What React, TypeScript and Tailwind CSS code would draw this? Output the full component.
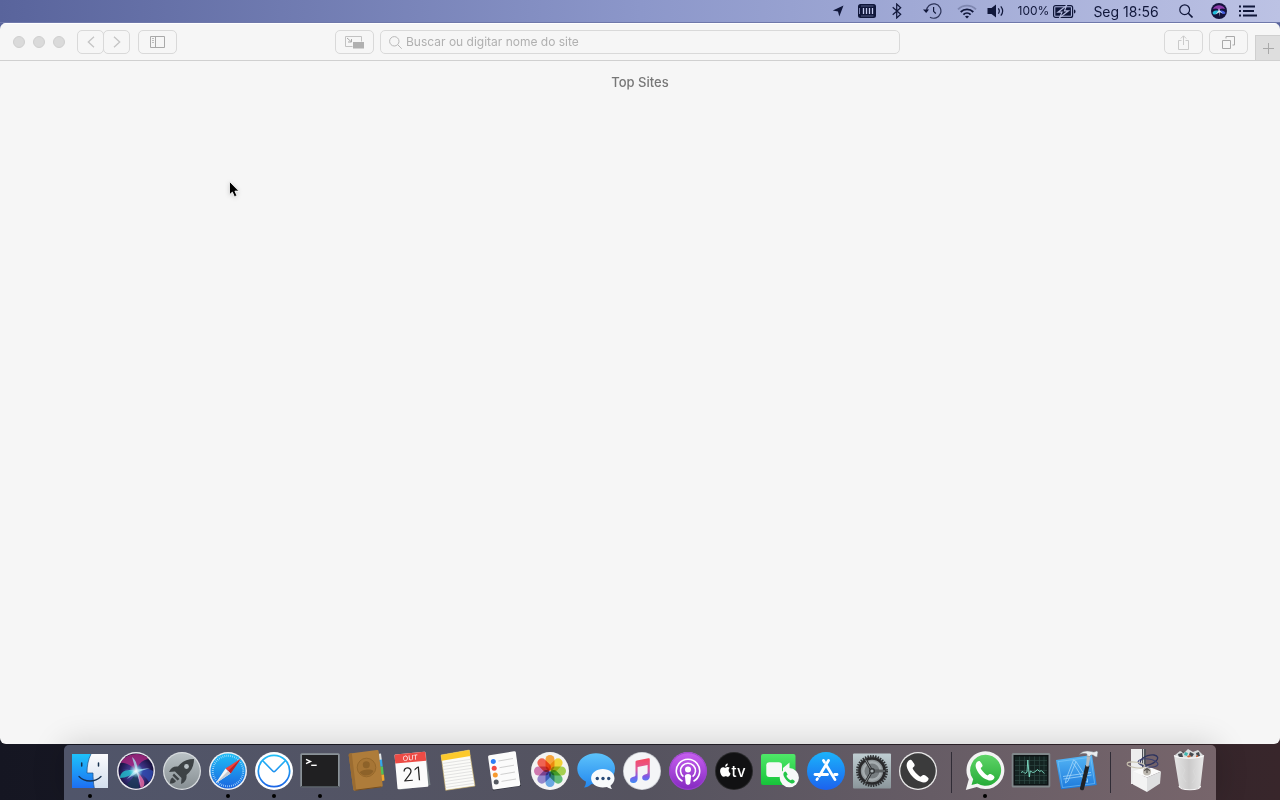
import React from 'react';

interface IconProps {
  children: React.ReactNode;
}

interface DockItem {
  label: string;
  icon: React.ReactNode;
  running?: boolean;
}

// Every dock icon is drawn on a 40x40 grid
const DockIcon: React.FC<IconProps> = ({ children }) => (
  <svg viewBox="0 0 40 40" className="w-10 h-10 overflow-visible" aria-hidden="true">
    {children}
  </svg>
);

const handsetPath =
  'M10.500 9.800c1-.9 2-1.200 2.700-.9 1 .5 3 3.500 3.400 4.900.2 1-.2 1.700-2 3.100-.3 1.500 5.500 8 8 8.800 1.800-1.600 2.500-2 3.500-1.700 1.500.5 4 2.300 4.400 3.300.3.900-.2 2-1.300 3-1.700 1.500-4 1.800-7 .3C16 28.500 11.500 23 9.300 17.500c-1.200-3-.8-5.800 1.200-7.700z';

const FinderIcon = () => (
  <DockIcon>
    <defs>
      <linearGradient id="finderBlue" x1="0" y1="0" x2="0" y2="1">
        <stop offset="0" stopColor="#1ec3fb" />
        <stop offset="1" stopColor="#1d6ff2" />
      </linearGradient>
      <linearGradient id="finderWhite" x1="0" y1="0" x2="0" y2="1">
        <stop offset="0" stopColor="#fbfbfd" />
        <stop offset="1" stopColor="#d3dfee" />
      </linearGradient>
    </defs>
    <rect x="2" y="3" width="36" height="34" fill="url(#finderBlue)" />
    <path d="M21 3C18 9 17 15 17 22h6c0 5 .3 10 1.300 15H38V3z" fill="url(#finderWhite)" />
    <path d="M21 3C18 9 17 15 17 22h6c0 5 .3 10 1.300 15" fill="none" stroke="#1c4f86" strokeWidth=".7" />
    <path d="M11.700 12v3M28.500 12v3" stroke="#16304e" strokeWidth="1.5" strokeLinecap="round" />
    <path d="M9 25.500c6 6 16 6 22 0" fill="none" stroke="#16304e" strokeWidth="1.3" strokeLinecap="round" />
  </DockIcon>
);

const SiriIcon = () => (
  <DockIcon>
    <defs>
      <radialGradient id="siriBase" cx=".5" cy=".55" r=".55">
        <stop offset="0" stopColor="#4c6fb8" />
        <stop offset=".5" stopColor="#3a3080" />
        <stop offset="1" stopColor="#130d34" />
      </radialGradient>
      <radialGradient id="siriGlow">
        <stop offset="0" stopColor="#fff" />
        <stop offset=".35" stopColor="#d6f6ff" stopOpacity=".7" />
        <stop offset="1" stopColor="#7ff" stopOpacity="0" />
      </radialGradient>
      <clipPath id="siriClip">
        <circle cx="20" cy="20" r="17.500" />
      </clipPath>
    </defs>
    <circle cx="20" cy="20" r="19" fill="#e9e8ee" />
    <circle cx="20" cy="20" r="17.5" fill="url(#siriBase)" />
    <g clipPath="url(#siriClip)">
      <path d="M4 12C10 2 25 0 34 8c-6 0-12 4-14 12C16 15 10 11 4 12z" fill="#b52a86" opacity=".75" />
      <path d="M20 20C10 17 4 21 4 27c6 0 12-3 16-7z" fill="#22cfd6" opacity=".75" />
      <path d="M20 20c3 6 3 12 5 18 3-2 4-5 3-8-2-4-4-7-8-10z" fill="#ef6ca4" opacity=".8" />
      <path d="M20 20c-2 6-6 10-9 13 3 4 8 6 12 5 0-6-1-12-3-18z" fill="#1a3a55" opacity=".8" />
      <path d="M20 20c6-3 12-3 17 0 0 5-2 9-4 11-3-5-7-8-13-11z" fill="#2f4bb0" opacity=".8" />
      <path d="M20 20L16 6c4 3 5 7 5.500 12.500L34 17l-12 4 3 14-4-13-10 6 7-8L6 18z" fill="#a9e8f4" opacity=".75" />
    </g>
    <circle cx="20" cy="20" r="7" fill="url(#siriGlow)" />
  </DockIcon>
);

const LaunchpadIcon = () => (
  <DockIcon>
    <defs>
      <linearGradient id="launchpadBg" x1="0" y1="0" x2="0" y2="1">
        <stop offset="0" stopColor="#b9c1c5" />
        <stop offset="1" stopColor="#878f93" />
      </linearGradient>
    </defs>
    <circle cx="20" cy="20" r="19" fill="#d9dde0" />
    <circle cx="20" cy="20" r="17.8" fill="url(#launchpadBg)" />
    <path
      d="M32 8c-7 0-12 2.500-16 7.500-4-.5-7 1-9 5.500l6-.5 6.500 6.500-.5 6c4.500-2 6-5 5.500-9 5-4 7.500-9 7.500-16z"
      fill="#3d4245"
    />
    <path d="M12 22.500l5.500 5.500-2 1.500-5-5zM10.500 26.500c-2 1-2.500 3-2.500 6 3 0 5-.5 6-2.500z" fill="#3d4245" />
    <circle cx="24.500" cy="15.500" r="2.400" fill="#b7bfc3" />
  </DockIcon>
);

const SafariIcon = () => (
  <DockIcon>
    <defs>
      <linearGradient id="safariBg" x1="0" y1="0" x2="0" y2="1">
        <stop offset="0" stopColor="#1fbdf5" />
        <stop offset="1" stopColor="#1b66e0" />
      </linearGradient>
    </defs>
    <circle cx="20" cy="20" r="19" fill="#eef0f3" />
    <circle cx="20" cy="20" r="17.5" fill="url(#safariBg)" />
    <circle cx="20" cy="20" r="15.2" fill="none" stroke="#c7ebff" strokeWidth="2" strokeDasharray=".6 1.39" />
    <path d="M33 7.500L17.500 17.500l5 5z" fill="#f1413c" />
    <path d="M22.500 22.500L33 7.500 20 20z" fill="#b9242a" />
    <path d="M7.500 32.500l10-15 5 5z" fill="#f7f7f7" />
    <path d="M7.500 32.500L20 20l2.500 2.500z" fill="#c5ccd3" />
  </DockIcon>
);

const MailIcon = () => (
  <DockIcon>
    <defs>
      <linearGradient id="mailRing" x1="0" y1="3" x2="0" y2="37" gradientUnits="userSpaceOnUse">
        <stop offset="0" stopColor="#22c3f8" />
        <stop offset="1" stopColor="#1b62e6" />
      </linearGradient>
    </defs>
    <circle cx="20" cy="20" r="19" fill="#fff" />
    <circle cx="20" cy="20" r="15.7" fill="none" stroke="url(#mailRing)" strokeWidth="1.7" />
    <path d="M8.500 9.500L19 20.200c.6.600 1.400.6 2 0L31.500 9.500" fill="none" stroke="url(#mailRing)" strokeWidth="1.6" />
  </DockIcon>
);

const TerminalIcon = () => (
  <DockIcon>
    <rect x=".3" y="2.3" width="39.4" height="34" rx="1.5" fill="#8a9298" />
    <rect x="1" y="35" width="38" height="1.3" fill="#4e555b" />
    <rect x="2" y="4" width="36" height="31" fill="#202022" />
    <path d="M6 8.300l4.500 2.200L6 12.700" fill="none" stroke="#fff" strokeWidth="1.4" />
    <path d="M11.200 14.300h5.500" stroke="#fff" strokeWidth="1.4" />
  </DockIcon>
);

const ContactsIcon = () => (
  <DockIcon>
    <path d="M31 3l4-.5 1 8-4 1z" fill="#dfe3e6" />
    <path d="M32 9l4-.5.700 7-4 .5z" fill="#37a7ea" />
    <path d="M33 16l4-.5.700 8-4 .5z" fill="#53c355" />
    <path d="M33 24l5-.5.500 6-5 1z" fill="#f3a72d" />
    <path d="M2.700 4.200Q2.600 2.700 4 2.500L31-.9q1.400-.2 1.600 1.200l4.100 34q.2 1.400-1.200 1.600L9 39.600q-1.500.2-1.700-1.300z" fill="#ae7c3a" />
    <path d="M2.700 4.200Q2.600 2.700 4 2.500l1.800-.2 4.500 37.100-1.300.2q-1.500.2-1.700-1.300z" fill="#9b6c31" />
    <path d="M9.500 39.200l26-3.400" stroke="#754e20" strokeWidth="1" />
    <circle cx="20.500" cy="16.500" r="9.3" fill="#a67535" stroke="#8f6328" strokeWidth=".8" />
    <circle cx="20.300" cy="13.700" r="3.500" fill="#8d6229" />
    <path d="M13.700 21.500c2-3 11-4.200 13.800-1.500-2.500 5.300-10.500 6.300-13.800 1.500z" fill="#8d6229" />
  </DockIcon>
);

const CalendarIcon = () => (
  <DockIcon>
    <path d="M5 8L34 3l4.500 31-31 5z" fill="#778084" />
    <g transform="rotate(-5 20 20)">
      <rect x="4" y="2" width="31" height="35" rx="1" fill="#fbfbfb" />
      <path d="M4 11V3a1 1 0 0 1 1-1h29a1 1 0 0 1 1 1v8z" fill="#ec4b45" />
      <text x="19.500" y="9.300" textAnchor="middle" fontSize="7" fill="#fff" fontFamily="Inter, sans-serif">OUT</text>
      <text x="19.500" y="30" textAnchor="middle" fontSize="19" fontWeight="300" fill="#222" fontFamily="Inter, sans-serif">21</text>
    </g>
  </DockIcon>
);

const NotesIcon = () => (
  <DockIcon>
    <path d="M3 4L31.300-1 37 35 7.700 39.300z" fill="#fbfbf8" stroke="#d0b464" strokeWidth=".6" />
    <path d="M3 4L31.300-1l1 6L3.800 9.700z" fill="#fcc92c" />
    <path
      d="M4.200 12.500l28.500-4.200M4.700 15.500l28.500-4.200M5.100 18.500l28.500-4.200M5.500 21.500L34 17.300M6 24.500l28.500-4.200M6.400 27.500l28.600-4.200M6.800 30.500l28.700-4.200M7.200 33.500l28.700-4.200M7.500 36.500l29-4.200"
      stroke="#d2d2d2"
      strokeWidth=".6"
    />
  </DockIcon>
);

const RemindersIcon = () => (
  <DockIcon>
    <path d="M5 6l27-4 5 33-28 4.500z" fill="#2b2e38" />
    <path d="M4.100 6.200q-.2-1.600 1.400-1.900L30 .3q1.600-.3 1.900 1.300l4.400 31.500q.2 1.600-1.400 1.900L10.400 38.500q-1.600.3-1.900-1.300z" fill="#fbfbfb" />
    <circle cx="9.300" cy="10.400" r="2.5" fill="#2b7df5" />
    <circle cx="10.200" cy="17.200" r="2.5" fill="#f04b45" />
    <circle cx="11.300" cy="24" r="2.5" fill="#f79a2e" />
    <circle cx="12.200" cy="31" r="2.5" fill="#555961" />
    <path d="M14.500 10L29 7.500M15.500 16.700L30 14.200M16.500 23.500L31 21M17.500 30.400L32 28" stroke="#bbb" strokeWidth=".7" />
  </DockIcon>
);

const petals = ['#f79b27', '#f2cf22', '#9ccb3e', '#53b66b', '#5b9fe0', '#8a7cc8', '#cb6aa8', '#ef5340'];

const PhotosIcon = () => (
  <DockIcon>
    <circle cx="20" cy="20" r="19" fill="#f3f3f3" />
    <g className="isolate">
      {petals.map((color, index) => (
        <rect
          key={color}
          x="15.5"
          y="4"
          width="9"
          height="15.5"
          rx="4.5"
          fill={color}
          opacity=".9"
          className="mix-blend-multiply"
          transform={`rotate(${index * 45} 20 20)`}
        />
      ))}
    </g>
  </DockIcon>
);

const MessagesIcon = () => (
  <DockIcon>
    <defs>
      <linearGradient id="bubbleBlue" x1="0" y1="0" x2="0" y2="1">
        <stop offset="0" stopColor="#5dc3fb" />
        <stop offset="1" stopColor="#2387ee" />
      </linearGradient>
    </defs>
    <path
      d="M20 2.300c10.500 0 19 6.700 19 15.500s-8.500 15.500-19 15.500c-1.600 0-3-.1-4.400-.4-2 2-4.600 3.300-7.600 3.700 1.400-1.700 2-3.600 1.900-6C4.700 28 1.300 23.400 1.300 17.800 1.300 9 9.700 2.300 20 2.300z"
      fill="url(#bubbleBlue)"
    />
    <path
      d="M26.800 18c6.500 0 11.700 4 11.700 9.300 0 3-1.500 5.400-3.900 7.200.1 1.300.600 2.500 1.600 3.500-2-.1-3.800-.8-5.200-1.900-1.300.3-2.700.5-4.200.5-6.500 0-11.700-4-11.700-9.300S20.300 18 26.800 18z"
      fill="#f8fafc"
    />
    <circle cx="21.300" cy="27.500" r="1.7" fill="#274a78" />
    <circle cx="27" cy="27.500" r="1.7" fill="#274a78" />
    <circle cx="32.700" cy="27.500" r="1.7" fill="#274a78" />
  </DockIcon>
);

const MusicIcon = () => (
  <DockIcon>
    <defs>
      <linearGradient id="musicNote" x1="0" y1="7" x2="0" y2="32" gradientUnits="userSpaceOnUse">
        <stop offset="0" stopColor="#f8495e" />
        <stop offset=".45" stopColor="#e0599a" />
        <stop offset=".75" stopColor="#7a5be8" />
        <stop offset="1" stopColor="#3f8df5" />
      </linearGradient>
    </defs>
    <circle cx="20" cy="20" r="19" fill="#c9ccd1" />
    <circle cx="20" cy="20" r="18.2" fill="#f4f5f7" />
    <path
      d="M13.500 11.200c0-1 .5-1.500 1.400-1.700l11.400-2.300c1-.2 1.500.2 1.500 1.200v17c0 2.300-1.600 3.900-4 4.100-2.200.2-3.600-1-3.600-2.800 0-1.900 1.300-3 3.500-3.400 1.300-.3 1.900-.6 1.900-1.800v-7.500l-10 2.100v11.800c0 2.300-1.600 3.900-4 4.100-2.200.2-3.600-1-3.600-2.800 0-1.900 1.300-3 3.500-3.400 1.400-.3 2-.6 2-1.800z"
      fill="url(#musicNote)"
    />
  </DockIcon>
);

const PodcastsIcon = () => (
  <DockIcon>
    <defs>
      <linearGradient id="podcastBg" x1="0" y1="0" x2="0" y2="1">
        <stop offset="0" stopColor="#c860f0" />
        <stop offset="1" stopColor="#8429c0" />
      </linearGradient>
    </defs>
    <circle cx="20" cy="20" r="19" fill="url(#podcastBg)" />
    <circle cx="20" cy="20" r="18.3" fill="none" stroke="#9a45cb" strokeWidth="1" />
    <path d="M14.500 30.300a11.700 11.700 0 1 1 11 0" fill="none" stroke="#fff" strokeWidth="1.6" />
    <path d="M15.400 25.600a7.500 7.500 0 1 1 9.200 0" fill="none" stroke="#fff" strokeWidth="1.6" />
    <circle cx="20" cy="18.600" r="3" fill="#fff" />
    <path d="M16.900 25.300c0-3 6.200-3 6.200 0l-.8 6.700c-.3 2.400-4.300 2.400-4.600 0z" fill="#fff" />
  </DockIcon>
);

const TvIcon = () => (
  <DockIcon>
    <circle cx="20" cy="20" r="19" fill="#29292b" />
    <circle cx="20" cy="20" r="18" fill="#111113" />
    <path
      d="M15.700 16.800c-1.200-1-2.600-.7-3.600-.3-.8.3-1.200.2-1.900-.1-2.300-.8-4.100 1-4.100 3.700 0 2.300 1.700 5.700 3.500 5.700.8 0 1.200-.5 2.100-.5s1.300.5 2.100.5c1.300 0 2.400-2 2.800-3.400-2-.9-2.700-4-.9-5.600zM13.800 12.600c-1.700.2-2.800 1.600-2.600 3.200 1.600 0 2.700-1.500 2.600-3.200z"
      fill="#fff"
    />
    <text x="17.500" y="25.500" fontSize="15" fontWeight="500" fill="#fff" fontFamily="Inter, sans-serif">tv</text>
  </DockIcon>
);

const FaceTimeIcon = () => (
  <DockIcon>
    <defs>
      <linearGradient id="facetimeBg" x1="0" y1="0" x2="0" y2="1">
        <stop offset="0" stopColor="#4fe868" />
        <stop offset="1" stopColor="#16c43a" />
      </linearGradient>
    </defs>
    <rect x="1" y="3" width="34.5" height="31" rx="2" fill="url(#facetimeBg)" />
    <rect x="6.3" y="11.3" width="15.7" height="14.7" rx="3" fill="#f6f8f6" />
    <path d="M23 17l6.500-5.500v14L23 21z" fill="#f6f8f6" />
    <circle cx="29.300" cy="26.700" r="9.600" fill="#f7f8f8" />
    <path d={handsetPath} fill="#22c648" transform="translate(18.9 16) scale(.52)" />
  </DockIcon>
);

const AppStoreIcon = () => (
  <DockIcon>
    <defs>
      <linearGradient id="storeBg" x1="0" y1="0" x2="0" y2="1">
        <stop offset="0" stopColor="#1bb3fb" />
        <stop offset="1" stopColor="#1c62ee" />
      </linearGradient>
    </defs>
    <circle cx="20" cy="20" r="19" fill="url(#storeBg)" />
    <g stroke="#fff" strokeWidth="2.8" strokeLinecap="round">
      <path d="M22.500 9.500L13.300 25" />
      <path d="M11.500 27.600l-.6 1" />
      <path d="M17.500 9.500l1 1.700" />
      <path d="M20.600 14.700L29 28.600" />
      <path d="M9 23.500h12.500" />
      <path d="M28.700 23.500H31" />
    </g>
  </DockIcon>
);

const SettingsIcon = () => (
  <DockIcon>
    <defs>
      <linearGradient id="settingsBg" x1="0" y1="0" x2="0" y2="1">
        <stop offset="0" stopColor="#bfcdd2" />
        <stop offset="1" stopColor="#8b969b" />
      </linearGradient>
    </defs>
    <rect x="1" y="2.5" width="38" height="35" rx="1" fill="url(#settingsBg)" />
    <circle cx="20" cy="20" r="14.7" fill="#727a7e" stroke="#2c2e30" strokeWidth="2.6" strokeDasharray="1.4 1.17" />
    <circle cx="20" cy="20" r="12.5" fill="#8d9497" stroke="#29292b" strokeWidth="2.6" />
    <circle cx="20" cy="20" r="10" fill="#a5acaf" />
    <circle cx="20" cy="20" r="7.5" fill="#777d80" />
    <path d="M20 20h13M20 20l-6.500-11.300M20 20l-6.500 11.300" stroke="#2c2e30" strokeWidth="2.6" />
    <path d="M20 20h13M20 20l-6.500-11.300M20 20l-6.500 11.300" stroke="#b5bcbf" strokeWidth=".7" />
    <circle cx="20" cy="20" r="3" fill="#333638" />
    <circle cx="20" cy="20" r="1.6" fill="#a5acaf" />
  </DockIcon>
);

const PhoneIcon = () => (
  <DockIcon>
    <circle cx="20" cy="20" r="19" fill="#e9e9e9" />
    <circle cx="20" cy="20" r="17.7" fill="#3b3b3c" />
    <path d={handsetPath} fill="#fff" />
  </DockIcon>
);

const WhatsAppIcon = () => (
  <DockIcon>
    <defs>
      <linearGradient id="whatsappBg" x1="0" y1="0" x2="0" y2="1">
        <stop offset="0" stopColor="#5fd468" />
        <stop offset="1" stopColor="#26ac38" />
      </linearGradient>
    </defs>
    <path d="M20.500.3a18.900 18.900 0 1 1-8.700 35.700L.8 39l3-10.700A18.900 18.900 0 0 1 20.500.3z" fill="#f3f3f3" />
    <path d="M20.500 3.700a15.500 15.500 0 1 1-8 28.700L6.500 34l1.700-5.700A15.500 15.500 0 0 1 20.500 3.700z" fill="url(#whatsappBg)" />
    <path d={handsetPath} fill="#fff" transform="translate(3.2 2.4) scale(.86)" />
  </DockIcon>
);

const ActivityIcon = () => (
  <DockIcon>
    <rect x=".7" y="2" width="38.6" height="34.5" rx="1.5" fill="#80878a" />
    <rect x="2.5" y="4" width="35" height="30.5" fill="#0d1314" />
    <rect x="4" y="5.5" width="32" height="27.5" fill="#142321" />
    <path
      d="M8.500 5.500V33M13.500 5.500V33M18.500 5.500V33M23.500 5.500V33M28.500 5.500V33M33 5.500V33M4 9.500h32M4 14.500h32M4 19.500h32M4 24.500h32M4 29.500h32"
      stroke="#2f4c46"
      strokeWidth=".6"
    />
    <path
      d="M10 21.500l2-1 2 2 2-1.500.8-12 1.500 17 1-6 2.500 1.500 2-.5 2.500-2.500 2.500 2 1.500-1 3 3"
      fill="none"
      stroke="#7fe0c6"
      strokeWidth=".9"
    />
  </DockIcon>
);

const XcodeIcon = () => (
  <DockIcon>
    <defs>
      <linearGradient id="xcodeBg" x1="0" y1="0" x2="0" y2="1">
        <stop offset="0" stopColor="#55b6f5" />
        <stop offset="1" stopColor="#1c79dc" />
      </linearGradient>
    </defs>
    <path d="M-1 9L35 4l4.700 30L4 38.300z" fill="url(#xcodeBg)" />
    <path d="M1 10.700l32.700-4.500 4 26.300L5.500 36.500z" fill="none" stroke="#8fd0fa" strokeWidth=".5" />
    <path
      d="M16.500 9L9 28.500 8.500 32l2.500-2L19 10.500zM19 10.500l11.500 18M16.500 12.500l11 17.500 3 1.300v-3M6 25.500l28-4M6.500 28l28-4"
      fill="none"
      stroke="#a3d7fa"
      strokeWidth=".8"
    />
    <path d="M28.500 14l4 .8L27 38q-.4 1.500-2 1.200l-1-.3q-1.400-.4-1-2z" fill="#202225" />
    <path d="M30 4l3.500.7-2 11-2.600-.5z" fill="#b4babe" />
    <path
      d="M22.300 3.500c2.500-3.500 8-4.300 12-3 2 .7 3.500.6 5-.5l1.700.7-.8 5.300-2-.3c-1-1.400-2.400-1.900-4.400-1.700l-1 1.500-3-.6.200-1.900c-2.700-.7-5.200-.6-7.700.5z"
      fill="#e9ecee"
      stroke="#71777c"
      strokeWidth=".5"
    />
  </DockIcon>
);

const SystemInfoIcon = () => (
  <DockIcon>
    <path d="M7-2h11.700v35H7z" fill="#ededed" />
    <path d="M18-2h4v24h-4z" fill="#52555b" />
    <path d="M19.500-2v24" stroke="#c7cacc" strokeWidth="1" />
    <path d="M9 20.500l14-5.500 14 5.500-14 6z" fill="#fafafa" />
    <path d="M9 20.500l14 6V41L9 33.500z" fill="#f3f3f3" />
    <path d="M37 20.500l-14 6V41l13-8.500z" fill="#dedfe0" />
    <ellipse cx="25" cy="9" rx="9" ry="4.5" fill="none" stroke="#2d335e" strokeWidth="1.3" transform="rotate(-18 25 9)" />
    <ellipse cx="24" cy="12" rx="10" ry="4" fill="none" stroke="#3b4070" strokeWidth="1.1" transform="rotate(8 24 12)" />
    <ellipse cx="12" cy="14" rx="9" ry="2.8" fill="none" stroke="#c9c3b1" strokeWidth="1" transform="rotate(8 12 14)" />
    <circle cx="23" cy="20.500" r="4" fill="#bdb8b0" />
    <path d="M20.500 20c1-3 4-3 5 0M23 17v5" fill="none" stroke="#55504c" strokeWidth="1.2" />
  </DockIcon>
);

const TrashIcon = () => (
  <DockIcon>
    <defs>
      <linearGradient id="trashBody" x1="0" y1="0" x2="1" y2="0">
        <stop offset="0" stopColor="#e6e6e6" />
        <stop offset=".5" stopColor="#cbcaca" />
        <stop offset="1" stopColor="#e8e8e8" />
      </linearGradient>
    </defs>
    <path d="M5 4l5-4 4 2 4-4 5 3 5-2 5 5-2 5H8z" fill="#d9dcdd" />
    <path d="M8 3l4-1 1 4-4 1zM20 1l4 2-2 3-3-2zM26 2l3-1 1 4-3 1zM12 0l2 1-1 2z" fill="#45484d" />
    <path d="M15 1l3 1-1 3-3-1z" fill="#41b8b0" />
    <path d="M17 5l3-1 1 2-3 1zM26 5l2-1v3h-2z" fill="#d0683d" />
    <path d="M4 4.500C10 8 28 8 34 4.500L30.500 35c-.5 5-20.500 5-21.500 0z" fill="url(#trashBody)" />
    <path d="M4 4.500C10 8 28 8 34 4.500" fill="none" stroke="#fafafa" strokeWidth="1.2" />
    <path d="M9 35c1 5 21 5 21.500 0" fill="none" stroke="#f6f6f6" strokeWidth="1.2" />
    <path d="M11 14l4 5-3 6 4 6M28 14l-5 6 3 6-4 6" fill="none" stroke="#dcdcdc" strokeWidth="1" opacity=".6" />
  </DockIcon>
);

const apps: DockItem[] = [
  { label: 'Finder', icon: <FinderIcon />, running: true },
  { label: 'Siri', icon: <SiriIcon /> },
  { label: 'Launchpad', icon: <LaunchpadIcon /> },
  { label: 'Safari', icon: <SafariIcon />, running: true },
  { label: 'Airmail', icon: <MailIcon />, running: true },
  { label: 'Terminal', icon: <TerminalIcon />, running: true },
  { label: 'Contatos', icon: <ContactsIcon /> },
  { label: 'Calendário', icon: <CalendarIcon /> },
  { label: 'Notas', icon: <NotesIcon /> },
  { label: 'Lembretes', icon: <RemindersIcon /> },
  { label: 'Fotos', icon: <PhotosIcon /> },
  { label: 'Mensagens', icon: <MessagesIcon /> },
  { label: 'Música', icon: <MusicIcon /> },
  { label: 'Podcasts', icon: <PodcastsIcon /> },
  { label: 'TV', icon: <TvIcon /> },
  { label: 'FaceTime', icon: <FaceTimeIcon /> },
  { label: 'App Store', icon: <AppStoreIcon /> },
  { label: 'Preferências do Sistema', icon: <SettingsIcon /> },
  { label: 'Telefone', icon: <PhoneIcon /> },
];

const recentApps: DockItem[] = [
  { label: 'WhatsApp', icon: <WhatsAppIcon />, running: true },
  { label: 'Monitor de Atividade', icon: <ActivityIcon /> },
  { label: 'Xcode', icon: <XcodeIcon /> },
];

const places: DockItem[] = [
  { label: 'Arquivos', icon: <SystemInfoIcon /> },
  { label: 'Lixo', icon: <TrashIcon /> },
];

const DockGroup: React.FC<{ items: DockItem[] }> = ({ items }) => (
  <ul className="flex">
    {items.map((item) => (
      <li key={item.label}>
        <button className="flex flex-col items-center gap-[3px] w-[46px] pt-1.5" aria-label={item.label}>
          {item.icon}
          {item.running && <span className="w-1 h-1 rounded-full bg-black" />}
        </button>
      </li>
    ))}
  </ul>
);

const DockSeparator = () => (
  <div className="flex justify-center w-[21px] pt-[7px]">
    <span className="w-px h-[41px] bg-[#302c36]" />
  </div>
);

const Dock = () => (
  <nav
    aria-label="Dock"
    className="relative z-10 flex h-[55px] mt-px px-[3px] mx-auto rounded-t-[5px] bg-linear-to-r from-[#50556a] via-[#55535f] to-[#77656b] shadow-[0_0_32px_rgba(0,0,0,0.18)]"
  >
    <DockGroup items={apps} />
    <DockSeparator />
    <DockGroup items={recentApps} />
    <DockSeparator />
    <DockGroup items={places} />
  </nav>
);

const MenuBar = () => (
  <header className="flex justify-end items-center h-[23px] pr-4 border-b border-[#6f78aa] bg-linear-to-r from-[#59649c] via-[#8c97ca] to-[#bcc2e4] text-[#10173a]">
    <button className="flex justify-center w-8" aria-label="Localização">
      <svg viewBox="0 0 12 12" className="w-3 h-3">
        <path d="M11.500.5L7.300 11.500 6 6.500.8 5.600z" fill="currentColor" />
      </svg>
    </button>
    <button className="flex justify-center w-[26px]" aria-label="Memória">
      <svg viewBox="0 0 18 14" className="w-[18px] h-3.5">
        <rect width="18" height="14" rx="2.5" fill="currentColor" />
        <path d="M3 2h12.500M3 12h12.500" stroke="#7e87b4" strokeWidth=".6" />
        <path d="M1.500 4v6" stroke="#9ca5d1" strokeWidth=".8" />
        <path d="M5.500 4v6M8.500 4v6M11.500 4v6M14.500 4v6" stroke="#c3c9ec" strokeWidth="1.3" />
      </svg>
    </button>
    <button className="flex justify-center w-[34px]" aria-label="Bluetooth">
      <svg viewBox="0 0 10 16" className="w-2.5 h-4">
        <path d="M.7 4.300l8 7L4.700 15V1l4 3.700-8 7" fill="none" stroke="currentColor" strokeWidth="1.2" />
      </svg>
    </button>
    <button className="flex justify-center w-9" aria-label="Time Machine">
      <svg viewBox="0 0 19 16" className="w-[19px] h-4">
        <path d="M3.500 8A7.200 7.200 0 1 1 7 14.200" fill="none" stroke="currentColor" strokeWidth="1.2" opacity=".8" />
        <path d="M0 6.500h6L3.200 10z" fill="currentColor" />
        <path d="M10.600 4v4.300l2.200 2.200" fill="none" stroke="currentColor" strokeWidth="1.2" />
      </svg>
    </button>
    <button className="flex justify-center w-[34px]" aria-label="Wi-Fi">
      <svg viewBox="0 0 20 15" className="w-5 h-[15px]" fill="none" stroke="currentColor" strokeWidth="1.8">
        <path d="M1 5.300c5-4.900 13-4.900 18 0" opacity=".25" />
        <path d="M3.700 8c3.500-3.400 9.100-3.400 12.600 0" />
        <path d="M6.400 10.700c2-2 5.200-2 7.200 0" />
        <path d="M8 12.400c1.200-1 2.800-1 4 0l-2 2.200z" fill="currentColor" stroke="none" />
      </svg>
    </button>
    <button className="flex justify-center w-6" aria-label="Volume">
      <svg viewBox="0 0 18 14" className="w-[18px] h-3.5">
        <path d="M.5 4h4L9 .5v13L4.500 10h-4z" fill="currentColor" />
        <path d="M11.300 4.300c1.200 1.600 1.200 3.800 0 5.400M13.800 2.300c2.200 2.800 2.200 6.600 0 9.400" fill="none" stroke="currentColor" strokeWidth="1.2" />
      </svg>
    </button>
    <button className="flex justify-center items-center gap-1 w-[78px] text-[12px]" aria-label="Bateria 100%">
      100%
      <svg viewBox="0 0 23 13" className="w-[23px] h-[13px]">
        <rect x=".6" y=".6" width="19" height="11.8" rx="2" fill="none" stroke="currentColor" strokeWidth="1.2" />
        <rect x="2.3" y="2.3" width="15.6" height="8.4" fill="currentColor" />
        <path d="M21 4.500c2 .5 2 3.500 0 4z" fill="currentColor" />
        <path d="M13.500.5L5 7.200h4L6.700 12.500 15.500 5.800h-4z" fill="currentColor" stroke="#b3b9de" strokeWidth="1.2" />
      </svg>
    </button>
    <button className="w-20 text-[14px] whitespace-nowrap">Seg 18:56</button>
    <button className="flex justify-center w-10" aria-label="Spotlight">
      <svg viewBox="0 0 14 14" className="w-3.5 h-3.5" fill="none" stroke="currentColor">
        <circle cx="5.700" cy="5.700" r="4.9" strokeWidth="1.2" />
        <path d="M9.300 9.300l4.200 4.200" strokeWidth="1.6" />
      </svg>
    </button>
    <button className="flex justify-center w-[26px]" aria-label="Siri">
      <svg viewBox="0 0 16 16" className="w-4 h-4">
        <circle cx="8" cy="8" r="8" fill="#15133c" />
        <path d="M2 6c2-5 10-5 12 0-3-1-5-1-6 2-1-3-3-3-6-2z" fill="#8c3aa8" />
        <path d="M8 8c-4-1-6 0-6.500 2C3 13 6 11 8 8z" fill="#20bcd8" />
        <path d="M8 8c3-1 5.500 0 6.500 2-1 2-4 1-6.500-2z" fill="#4760e0" />
        <path d="M8 5l.7 2.500 3.300 3-3.300-1.500L9 14 8 9.500l-3.500 2L7.300 8z" fill="#d6f0fb" />
      </svg>
    </button>
    <button className="flex justify-center w-8" aria-label="Central de Notificações">
      <svg viewBox="0 0 18 12" className="w-[18px] h-3" stroke="currentColor" strokeWidth="1.8">
        <path d="M0 1.500h2M4 1.500h12M0 6h2M4 6h11M0 10.500h2M4 10.500h14" />
      </svg>
    </button>
  </header>
);

const toolButton = 'flex items-center justify-center h-6 border border-[#d9d9d9] rounded-[5px]';

const Toolbar = () => (
  <div className="grid grid-cols-[1fr_minmax(0,520px)_1fr] items-center h-[38px] border-t border-b border-t-white border-b-[#d0d0d0]">
    <div className="flex items-center pl-[13px] pr-1.5">
      <div className="flex gap-2 mr-3">
        <button className="w-3 h-3 rounded-full bg-[#dadada] border border-[#cfcfcf]" aria-label="Fechar" />
        <button className="w-3 h-3 rounded-full bg-[#dadada] border border-[#cfcfcf]" aria-label="Minimizar" />
        <button className="w-3 h-3 rounded-full bg-[#dadada] border border-[#cfcfcf]" aria-label="Ampliar" />
      </div>
      <div className="flex mr-2">
        <button className={`${toolButton} w-[27px]`} aria-label="Voltar">
          <svg viewBox="0 0 8 12" className="w-2 h-3">
            <path d="M7 .7L1.300 6 7 11.300" fill="none" stroke="#c4c4c4" strokeWidth="1.3" />
          </svg>
        </button>
        <button className={`${toolButton} w-[27px] -ml-px`} aria-label="Avançar">
          <svg viewBox="0 0 8 12" className="w-2 h-3">
            <path d="M1 .7L6.700 6 1 11.300" fill="none" stroke="#c4c4c4" strokeWidth="1.3" />
          </svg>
        </button>
      </div>
      <button className={`${toolButton} w-[39px]`} aria-label="Barra lateral">
        <svg viewBox="0 0 15 12" className="w-[15px] h-3" fill="none" stroke="#a9a9a9">
          <path d="M.5.5h14v11H.5zM5.500.5v11" />
          <path d="M2 2.500h2M2 4.500h2M2 6.500h2" stroke="#bdbdbd" />
        </svg>
      </button>
      <button className={`${toolButton} w-[39px] ml-auto`} aria-label="Picture in Picture">
        <svg viewBox="0 0 19 13" className="w-[19px] h-[13px]">
          <path d="M7.500 10.500h-7V.5h16v5" fill="none" stroke="#c2c2c2" />
          <path d="M2 2l4 3.500M6.500 3v3H3" fill="none" stroke="#a9a9a9" />
          <rect x="8" y="6" width="11" height="6.5" fill="#b0b0b0" />
        </svg>
      </button>
    </div>
    <label className="flex items-center gap-1 h-6 px-2 border border-[#d9d9d9] rounded-[5px]">
      <svg viewBox="0 0 13 13" className="w-[13px] h-[13px] shrink-0" fill="none" stroke="#b8b8b8">
        <circle cx="5.300" cy="5.300" r="4.700" />
        <path d="M8.700 8.700l4 4" />
      </svg>
      <input
        type="text"
        aria-label="Endereço"
        placeholder="Buscar ou digitar nome do site"
        className="flex-1 min-w-0 bg-transparent outline-none text-[12px] placeholder:text-[#b0b0b0]"
      />
    </label>
    <div className="flex items-end justify-end">
      <div className="flex gap-1.5 mr-[7px] self-center">
        <button className={`${toolButton} w-[39px]`} aria-label="Compartilhar">
          <svg viewBox="0 0 11 15" className="w-[11px] h-[15px]" fill="none" stroke="#cacaca">
            <path d="M3.500 5.500h-3v9h10v-9h-3M5.500 10V1M2.800 3.500L5.500.8l2.700 2.700" />
          </svg>
        </button>
        <button className={`${toolButton} w-[39px]`} aria-label="Todas as abas">
          <svg viewBox="0 0 13 13" className="w-[13px] h-[13px]" fill="none" stroke="#a9a9a9">
            <path d="M.5 4.500h8v8h-8zM4 2.500V.5h8.500V9h-2" />
          </svg>
        </button>
      </div>
      <button className="flex items-center justify-center w-[25px] h-[25px] -mb-1.5 bg-[#dedede] border-l border-t border-[#cfcfcf]" aria-label="Nova aba">
        <svg viewBox="0 0 11 11" className="w-[11px] h-[11px]" stroke="#a9a9a9">
          <path d="M5.500 0v11M0 5.500h11" />
        </svg>
      </button>
    </div>
  </div>
);

const Cursor = () => (
  <svg viewBox="0 0 12 18" className="absolute left-[228px] top-[157px] w-3 h-[18px] drop-shadow-sm" aria-hidden="true">
    <path d="M1.500 1.500v13.200l2.900-2.600 2 4.600 2.500-1-2-4.600h4z" fill="#000" stroke="#fff" strokeWidth=".8" />
  </svg>
);

const App: React.FC = () => {
  return (
    <div className="flex flex-col h-screen overflow-hidden bg-linear-to-r from-[#151622] via-[#232029] to-[#38262b] font-['Inter',sans-serif]">
      <MenuBar />

      {/* Menu bar colour shows behind the rounded top corners */}
      <div className="flex flex-col flex-1 min-h-0 bg-linear-to-b from-[#59649c] from-5% to-transparent to-6%">
        <main className="relative flex flex-col flex-1 rounded-[6px] bg-[#f6f6f6] overflow-hidden">
          <Toolbar />
          <h1 className="mt-[11px] text-center text-[13px] leading-5 font-medium text-[#777]">Top Sites</h1>
          <Cursor />
        </main>
      </div>

      <Dock />
    </div>
  );
};

export default App;
